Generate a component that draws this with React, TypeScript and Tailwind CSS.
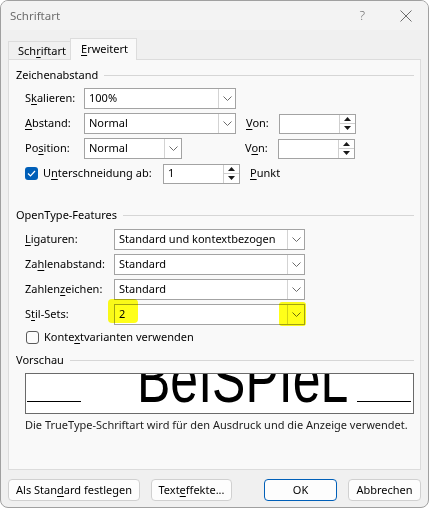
import React from "react";

const U = ({ c }: { c: string }) => (
  <span className="underline decoration-1 underline-offset-2">{c}</span>
);

function Chevron() {
  return (
    <svg width="9" height="5" viewBox="0 0 9 5">
      <path d="M0.5 0.5 L4.5 4.5 L8.5 0.5" fill="none" stroke="#6b6b6b" strokeWidth="1" />
    </svg>
  );
}

function Combo({ children, className }: { children?: React.ReactNode; className: string }) {
  return (
    <div className={"flex h-[21px] border border-[#a3a3a3] bg-white " + className}>
      <div className="flex flex-1 items-center pl-[4px]">{children}</div>
      <div className="flex w-[17px] items-center justify-center border-l border-[#d3d3d3]">
        <Chevron />
      </div>
    </div>
  );
}

function Spin({ value, className }: { value?: string; className: string }) {
  return (
    <div className={"flex h-[20px] border border-[#a3a3a3] bg-white " + className}>
      <div className="flex flex-1 items-center pl-[4px]">{value}</div>
      <div className="flex w-[16px] flex-col border-l border-[#cfcfcf]">
        <div className="flex flex-1 items-center justify-center border-b border-[#cfcfcf]">
          <svg width="7" height="4" viewBox="0 0 7 4">
            <path d="M3.5 0 L7 4 L0 4Z" fill="#1a1a1a" />
          </svg>
        </div>
        <div className="flex flex-1 items-center justify-center">
          <svg width="7" height="4" viewBox="0 0 7 4">
            <path d="M0 0 L7 0 L3.5 4Z" fill="#1a1a1a" />
          </svg>
        </div>
      </div>
    </div>
  );
}

function Checked() {
  return (
    <div className="flex h-[13px] w-[13px] items-center justify-center rounded-[3px] bg-[#005fb8]">
      <svg width="9" height="7" viewBox="0 0 9 7">
        <path d="M1 3.5 L3.5 6 L8 1" fill="none" stroke="white" strokeWidth="1.2" />
      </svg>
    </div>
  );
}

function Unchecked() {
  return <div className="h-[13px] w-[13px] rounded-[3px] border border-[#5a5a5a] bg-[#fbfbfb]" />;
}

function Heading({ children }: { children: React.ReactNode }) {
  return (
    <div className="flex h-[16px] items-center pl-[7px] pr-[6px]">
      <span>{children}</span>
      <div className="ml-[6px] h-px flex-1 bg-[#d6d6d6]" />
    </div>
  );
}

function Btn({ children, className }: { children: React.ReactNode; className: string }) {
  return (
    <div
      className={
        "flex h-[22px] items-center justify-center rounded-[4px] border bg-[#fdfdfd] " + className
      }
    >
      {children}
    </div>
  );
}

export default function App() {
  return (
    <div className="h-[510px] w-[429px] bg-white font-['Noto_Sans',sans-serif] text-[11px] text-black">
      <div className="flex h-[508px] w-[429px] flex-col overflow-hidden rounded-[8px] border border-[#a0a0a0] bg-[#f0f0f0]">
        {/* Title bar */}
        <div className="flex h-[29px] items-center bg-[#f3f3f3] pl-[9px] text-[#6d6d6d]">
          <span className="text-[11.5px]">Schriftart</span>
          <span className="ml-auto text-[13px] font-light">?</span>
          <svg className="ml-[35px] mr-[16px]" width="12" height="12" viewBox="0 0 12 12">
            <path d="M0.5 0.5 L11.5 11.5 M11.5 0.5 L0.5 11.5" stroke="#6d6d6d" strokeWidth="1" />
          </svg>
        </div>

        {/* Tabs */}
        <div className="relative z-10 mt-[8px] flex h-[21px] items-end pl-[7px]">
          <div className="flex h-[18px] w-[62px] items-center border border-b-0 border-r-0 border-[#dcdcdc] pl-[9px] pt-[2px]">
            Sch<U c="r" />iftart
          </div>
          <div className="-mb-px flex h-[22px] w-[67px] items-center border border-b-0 border-[#dcdcdc] bg-[#f9f9f9] pl-[10px]">
            <U c="E" />rweitert
          </div>
        </div>

        {/* Panel */}
        <div className="relative mx-[7px] h-[411px] border border-[#dcdcdc] bg-[#f9f9f9]">
          <div className="pt-[7px]">
            <Heading>Zeichenabstand</Heading>
          </div>
          <div className="mt-[5px] flex flex-col gap-[4px] pl-[16px]">
            <div className="flex h-[21px] items-center">
              <span className="w-[59px]">
                S<U c="k" />alieren:
              </span>
              <Combo className="w-[152px]">100%</Combo>
            </div>
            <div className="flex h-[21px] items-center">
              <span className="w-[59px]">
                <U c="A" />bstand:
              </span>
              <Combo className="w-[152px]">Normal</Combo>
              <span className="ml-[10px] w-[33px]">
                <U c="V" />on:
              </span>
              <Spin className="w-[77px]" />
            </div>
            <div className="flex h-[21px] items-center">
              <span className="w-[59px]">
                Po<U c="s" />ition:
              </span>
              <Combo className="w-[98px]">Normal</Combo>
              <span className="ml-[63px] w-[33px]">
                V<U c="o" />n:
              </span>
              <Spin className="w-[77px]" />
            </div>
            <div className="flex h-[21px] items-center">
              <Checked />
              <span className="ml-[5px] w-[120px]">
                U<U c="n" />terschneidung ab:
              </span>
              <Spin value="1" className="w-[77px]" />
              <span className="ml-[10px]">
                <U c="P" />unkt
              </span>
            </div>
          </div>

          <div className="mt-[23px]">
            <Heading>OpenType-Features</Heading>
          </div>
          <div className="mt-[6px] flex flex-col gap-[4px] pl-[16px]">
            <div className="flex h-[21px] items-center">
              <span className="w-[89px]">
                <U c="L" />igaturen:
              </span>
              <Combo className="w-[191px]">Standard und kontextbezogen</Combo>
            </div>
            <div className="flex h-[21px] items-center">
              <span className="w-[89px]">
                Za<U c="h" />lenabstand:
              </span>
              <Combo className="w-[191px]">Standard</Combo>
            </div>
            <div className="flex h-[21px] items-center">
              <span className="w-[89px]">
                Zahlen<U c="z" />eichen:
              </span>
              <Combo className="w-[191px]">Standard</Combo>
            </div>
            <div className="flex h-[21px] items-center">
              <span className="w-[89px]">
                S<U c="t" />il-Sets:
              </span>
              <Combo className="w-[191px]">2</Combo>
            </div>
          </div>
          <div className="mt-[5px] flex h-[15px] items-center pl-[17px]">
            <Unchecked />
            <span className="ml-[5px]">
              Konte<U c="x" />tvarianten verwenden
            </span>
          </div>

          <div className="mt-[7px]">
            <Heading>Vorschau</Heading>
          </div>
          <div className="ml-[16px] mt-[5px] h-[41px] w-[389px] overflow-hidden border border-[#6a6a6a] bg-white">
            <div className="mt-[-14px] flex items-baseline">
              <div className="ml-[1px] h-px w-[54px] bg-black" />
              <div className="ml-[56px] w-[220px] origin-[50%_42px] scale-y-[1.35] font-['Liberation_Sans',sans-serif] text-[50px] leading-[50px] text-black">
                BeISPIeL
              </div>
              <div className="h-px w-[54px] bg-black" />
            </div>
          </div>
          <div className="mt-[3px] h-[15px] pl-[16px] leading-[15px] text-[#1c1c1c]">
            Die TrueType-Schriftart wird für den Ausdruck und die Anzeige verwendet.
          </div>

          {/* Highlighter marks */}
          <div className="pointer-events-none absolute left-[99px] top-[239px] h-[24px] w-[30px] rounded-[4px] bg-[#ffff00] opacity-90 mix-blend-multiply" />
          <div className="pointer-events-none absolute left-[270px] top-[242px] h-[24px] w-[27px] rounded-[3px] bg-[#ffff00] opacity-90 mix-blend-multiply" />
        </div>

        {/* Buttons */}
        <div className="mt-[9px] flex pl-[7px]">
          <Btn className="w-[132px] border-[#d0d0d0]">
            Als Stan<U c="d" />ard festlegen
          </Btn>
          <Btn className="ml-[11px] w-[81px] border-[#d0d0d0]">
            Text<U c="e" />ffekte...
          </Btn>
          <Btn className="ml-[32px] w-[73px] border-[#005fb8]">OK</Btn>
          <Btn className="ml-[11px] w-[73px] border-[#d0d0d0]">Abbrechen</Btn>
        </div>
      </div>
    </div>
  );
}
